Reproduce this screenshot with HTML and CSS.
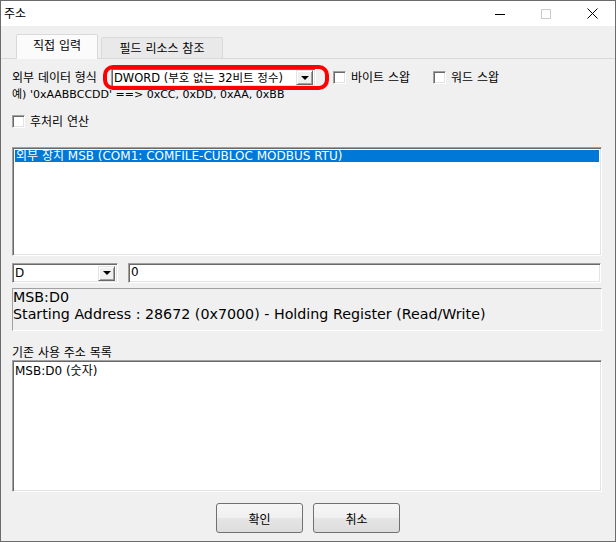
FILE: index.html
```html
<!DOCTYPE html>
<html lang="ko">
<head>
<meta charset="utf-8">
<title>주소</title>
<link rel="stylesheet" href="styles.css">
</head>
<body>
<div class="window">
  <header class="titlebar">
    <span class="title">주소</span>
    <div class="controls">
      <span class="ctl"><svg width="10" height="10" viewBox="0 0 10 10"><path d="M0 5.5H10" stroke="#000" stroke-width="1"/></svg></span>
      <span class="ctl"><svg width="10" height="10" viewBox="0 0 10 10"><rect x="0.5" y="0.5" width="9" height="9" fill="none" stroke="#cccccc"/></svg></span>
      <span class="ctl"><svg width="11" height="11" viewBox="0 0 11 11"><path d="M0.5 0.5L10.5 10.5M10.5 0.5L0.5 10.5" stroke="#000" stroke-width="1"/></svg></span>
    </div>
  </header>

  <div class="tabbar">
    <div class="tab active">직접 입력</div>
    <div class="tab">필드 리소스 참조</div>
  </div>

  <main class="panel">
    <div class="format-row">
      <span class="format-label">외부 데이터 형식</span>
      <div class="combo-wrap">
        <div class="combo combo-format">
          <span class="combo-text">DWORD (부호 없는 32비트 정수)</span>
          <span class="drop"><i class="arrow"></i></span>
        </div>
        <span class="highlight"></span>
      </div>
      <label class="check check-byte"><span class="box"></span>바이트 스왑</label>
      <label class="check"><span class="box"></span>워드 스왑</label>
    </div>

    <div class="example">예) '0xAABBCCDD' ==&gt; 0xCC, 0xDD, 0xAA, 0xBB</div>

    <label class="check check-post"><span class="box"></span>후처리 연산</label>

    <div class="listbox devices">
      <div class="item selected">외부 장치 MSB (COM1: COMFILE-CUBLOC MODBUS RTU)</div>
    </div>

    <div class="addr-row">
      <div class="combo combo-area">
        <span class="combo-text">D</span>
        <span class="drop"><i class="arrow"></i></span>
      </div>
      <div class="textbox">0</div>
    </div>

    <div class="info">
      <div>MSB:D0</div>
      <div>Starting Address : 28672 (0x7000) - Holding Register (Read/Write)</div>
    </div>

    <div class="section-label">기존 사용 주소 목록</div>

    <div class="listbox used">
      <div class="item">MSB:D0 (숫자)</div>
    </div>

    <div class="buttons">
      <button class="btn">확인</button>
      <button class="btn">취소</button>
    </div>
  </main>
</div>
</body>
</html>
```

FILE: styles.css
```css
* { box-sizing: border-box; }

html, body {
  margin: 0;
  padding: 0;
  background: #f0f0f0;
}

body {
  font-family: "DejaVu Sans", "Noto Sans CJK KR", sans-serif;
  font-size: 12px;
  color: #000;
}

.window {
  width: 616px;
  height: 542px;
  border: 1px solid #6b6b6b;
  background: #f0f0f0;
  display: flex;
  flex-direction: column;
}

/* title bar */
.titlebar {
  height: 25px;
  background: #fff;
  display: flex;
  align-items: center;
  justify-content: space-between;
  flex: none;
}

.title {
  padding-left: 3px;
  font-size: 12px;
  line-height: 16px;
}

.controls {
  display: flex;
  height: 100%;
}

.ctl {
  width: 46px;
  height: 100%;
  display: flex;
  align-items: center;
  justify-content: center;
}

/* tabs */
.tabbar {
  height: 33px;
  flex: none;
  display: flex;
  align-items: flex-end;
  padding-left: 15px;
  border-bottom: 1px solid #d9d9d9;
}

.tab {
  height: 21px;
  width: 122px;
  margin-left: 3px;
  background: #e9e9e9;
  border: 1px solid #d9d9d9;
  border-bottom: none;
  border-radius: 2px 2px 0 0;
  display: flex;
  align-items: center;
  justify-content: center;
  font-size: 12px;
  line-height: 14px;
  padding-top: 1px;
}

.tab.active {
  width: 82px;
  height: 25px;
  margin-left: 0;
  margin-bottom: -1px;
  background: #fbfbfb;
  padding-top: 0;
  padding-bottom: 2px;
  position: relative;
}

/* panel */
.panel {
  flex: 1;
  display: flex;
  flex-direction: column;
  padding: 0 13px 0 11px;
}

.format-row {
  margin-top: 9px;
  height: 19px;
  display: flex;
  align-items: center;
}

.format-label {
  width: 99px;
  line-height: 14px;
  padding-top: 1px;
}

.combo-wrap {
  position: relative;
  width: 205px;
  height: 19px;
}

.combo {
  background: #fff;
  border: 1px solid #a0a0a0;
  border-right-color: #fff;
  border-bottom-color: #fff;
  box-shadow: inset 1px 1px 0 #696969, inset -1px -1px 0 #e3e3e3;
  display: flex;
  align-items: center;
  justify-content: space-between;
  padding: 2px;
  height: 19px;
}

.combo-text {
  line-height: 14px;
  white-space: nowrap;
}

.combo-format .combo-text {
  font-size: 11.5px;
}

.drop {
  width: 17px;
  height: 15px;
  background: #f0f0f0;
  border: 1px solid #e3e3e3;
  border-right-color: #696969;
  border-bottom-color: #696969;
  box-shadow: inset 1px 1px 0 #fff, inset -1px -1px 0 #a0a0a0;
  display: flex;
  align-items: center;
  justify-content: center;
  flex: none;
}

.arrow {
  width: 0;
  height: 0;
  border-left: 4px solid transparent;
  border-right: 4px solid transparent;
  border-top: 4px solid #000;
}

.highlight {
  position: absolute;
  left: -8px;
  top: -3px;
  width: 226px;
  height: 25px;
  border: 4px solid #ff0000;
  border-radius: 10px;
  pointer-events: none;
}

.check {
  display: flex;
  align-items: center;
  gap: 5px;
  line-height: 14px;
  white-space: nowrap;
}

.check-byte {
  margin-left: 17px;
  width: 100px;
}

.box {
  width: 13px;
  height: 13px;
  background: #fff;
  border: 1px solid #a0a0a0;
  border-right-color: #fff;
  border-bottom-color: #fff;
  box-shadow: inset 1px 1px 0 #696969, inset -1px -1px 0 #e3e3e3;
  flex: none;
}

.example {
  margin-top: 0;
  height: 15px;
  line-height: 15px;
  font-size: 11px;
  white-space: nowrap;
}

.check-post {
  margin-top: 13px;
  height: 13px;
}

.listbox {
  background: #fff;
  border: 1px solid #a0a0a0;
  border-right-color: #fff;
  border-bottom-color: #fff;
  box-shadow: inset 1px 1px 0 #696969, inset -1px -1px 0 #e3e3e3;
  padding: 2px;
}

.devices {
  margin-top: 19px;
  height: 109px;
}

.item {
  height: 12px;
  line-height: 12px;
  padding-left: 1px;
  white-space: nowrap;
}

.item.selected {
  background: #0078d7;
  color: #fff;
}

.addr-row {
  margin-top: 7px;
  height: 20px;
  display: flex;
  gap: 10px;
}

.combo-area {
  width: 106px;
  height: 20px;
}

.textbox {
  flex: 1;
  height: 20px;
  background: #fff;
  border: 1px solid #a0a0a0;
  border-right-color: #fff;
  border-bottom-color: #fff;
  box-shadow: inset 1px 1px 0 #696969, inset -1px -1px 0 #e3e3e3;
  padding: 1px 2px;
  line-height: 14px;
  margin-right: 1px;
}

.info {
  margin-top: 5px;
  height: 43px;
  border: 1px solid #a0a0a0;
  border-right-color: #fff;
  border-bottom-color: #fff;
  font-size: 14.25px;
  line-height: 17px;
  white-space: nowrap;
}

.section-label {
  margin-top: 15px;
  height: 14px;
  line-height: 14px;
}

.used {
  height: 132px;
}

.used .item {
  height: 17px;
  line-height: 17px;
  padding-left: 0;
}

.buttons {
  margin-top: 11px;
  display: flex;
  justify-content: center;
  gap: 10px;
  padding-left: 2px;
}

.btn {
  width: 87px;
  height: 30px;
  font-family: inherit;
  font-size: 12px;
  color: #000;
  border: 1px solid #707070;
  border-radius: 3px;
  background: linear-gradient(#f6f6f6 0%, #f0f0f0 48%, #e5e5e5 52%, #dddddd 100%);
  padding: 0;
}
```
